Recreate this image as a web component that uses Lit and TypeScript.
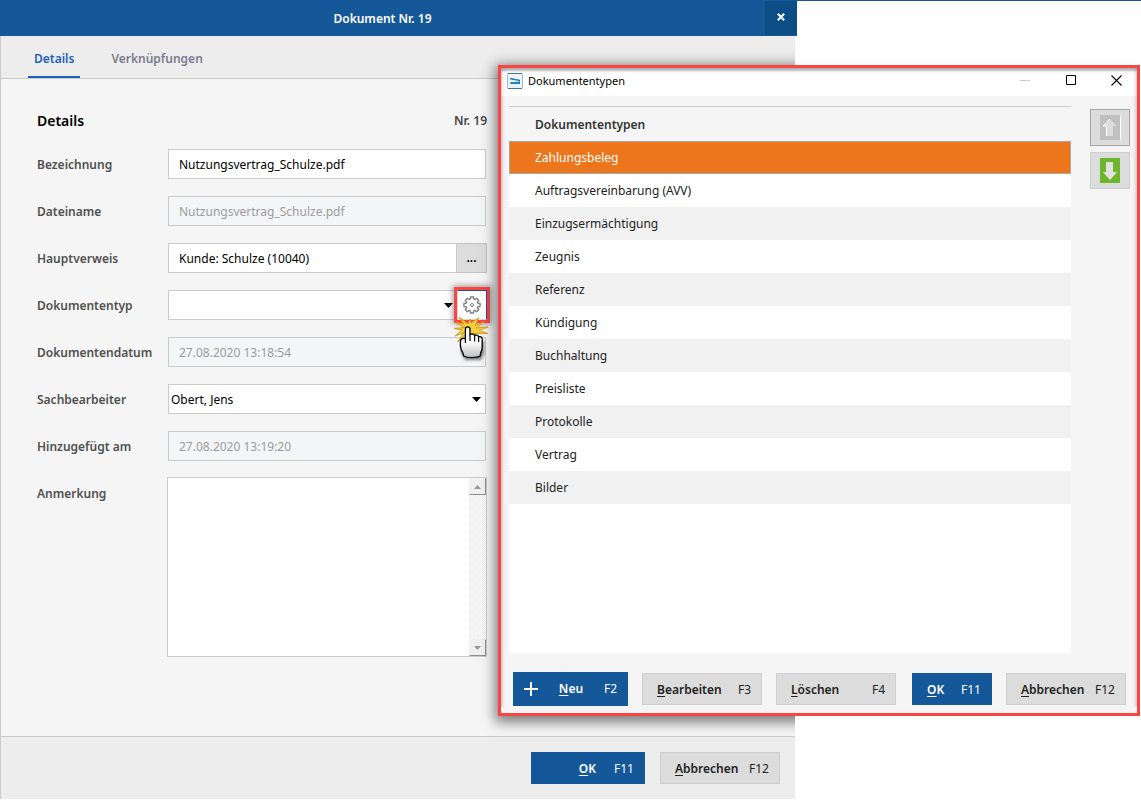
import { LitElement, html, css } from "lit";
import { customElement, property, state } from "lit/decorators.js";
import { classMap } from "lit/directives/class-map.js";

const base = css`
  *,
  *::before,
  *::after {
    box-sizing: border-box;
  }
  button,
  input,
  select,
  textarea {
    font: inherit;
    color: inherit;
    margin: 0;
    border-radius: 0;
  }
  button {
    cursor: pointer;
  }
`;

@customElement("command-button")
export class CommandButton extends LitElement {
  static styles = [
    base,
    css`
      :host {
        display: block;
        width: 120px;
      }
      .button {
        display: flex;
        align-items: center;
        justify-content: space-between;
        width: 100%;
        height: 32px;
        padding: 2px 10px 0 14px;
        border: 1px solid #cfcfcf;
        background: #dcdcdc;
        color: #222;
      }
      .primary {
        border-color: #145899;
        background: #145899;
        color: #fff;
      }
      .tall {
        height: 34px;
        padding: 0 10px;
      }
      .trailing {
        justify-content: flex-end;
        gap: 18px;
      }
      .label {
        font-weight: 600;
      }
      .mnemonic {
        text-decoration: underline;
        text-underline-offset: 2px;
      }
      .icon {
        display: block;
        width: 14px;
        height: 14px;
      }
    `,
  ];

  @property() label = "";
  @property() shortcut = "";
  @property({ type: Boolean }) primary = false;
  @property({ type: Boolean }) plus = false;
  @property({ type: Boolean }) trailing = false;

  render() {
    return html`<button
      type="button"
      class=${classMap({
        button: true,
        primary: this.primary,
        tall: this.plus,
        trailing: this.trailing,
      })}
    >
      ${this.plus
        ? html`<svg class="icon" viewBox="0 0 14 14" aria-hidden="true">
            <path d="M7 0v14M0 7h14" stroke="#fff" stroke-width="2" />
          </svg>`
        : ""}
      <span class="label"
        ><span class="mnemonic">${this.label.slice(0, 1)}</span>${this.label.slice(1)}</span
      >
      <span>${this.shortcut}</span>
    </button>`;
  }
}

@customElement("document-form")
export class DocumentForm extends LitElement {
  static styles = [
    base,
    css`
      :host {
        display: block;
      }
      .form {
        width: 450px;
        max-width: 100%;
        display: grid;
        gap: 17px;
      }
      .heading {
        display: flex;
        align-items: center;
        justify-content: space-between;
        height: 23px;
        color: #444;
        font-weight: 600;
      }
      .title {
        margin: 0;
        font-size: 14px;
        font-weight: 600;
        color: #000;
      }
      .row {
        display: grid;
        grid-template-columns: 131px 1fr;
        align-items: start;
      }
      .label {
        padding-top: 2px;
        line-height: 28px;
        font-weight: 600;
        color: #505050;
        white-space: nowrap;
      }
      .control {
        display: flex;
        min-width: 0;
        position: relative;
        padding-right: 1px;
      }
      .joined {
        padding-right: 0;
      }
      .text,
      .select {
        flex: 1;
        min-width: 0;
        height: 30px;
        border: 1px solid #cbcbcb;
        background: #fff;
        color: #000;
        outline: none;
      }
      .text {
        padding: 0 10px;
      }
      .text:disabled {
        background: #f4f5f7;
        color: #9c9c9c;
      }
      .select {
        appearance: none;
        padding: 2px 24px 0 2px;
      }
      .arrow {
        position: absolute;
        right: 6px;
        top: 13px;
        width: 9px;
        height: 5px;
        pointer-events: none;
      }
      .joined .arrow {
        right: 34px;
      }
      .more {
        width: 30px;
        height: 30px;
        padding: 0;
        border: 1px solid #c4c4c4;
        border-left: 0;
        background: #dcdcdc;
        color: #000;
        font-weight: 600;
      }
      .gear {
        width: 30px;
        height: 30px;
        padding: 0;
        display: grid;
        place-items: center;
        border: 1px solid #d8d8d8;
        border-top-color: #145899;
        border-right: 1px solid #145899;
        background: #fff;
        outline: 3px solid #fb4444;
        box-shadow: 0 0 6px 4px rgba(0, 0, 0, 0.4);
        position: relative;
      }
      .gear-icon {
        display: block;
        width: 18px;
        height: 18px;
      }
      .pointer {
        position: absolute;
        right: -2px;
        top: 27px;
        width: 36px;
        height: 48px;
        overflow: visible;
        pointer-events: none;
        z-index: 1;
      }
      .memo {
        display: flex;
        margin: -1px 0 0 -1px;
        height: 180px;
        border: 1px solid #cbcbcb;
        background: #fff;
      }
      .area {
        flex: 1;
        min-width: 0;
        border: 0;
        padding: 6px 10px;
        resize: none;
        outline: none;
        background: #fff;
        overflow: hidden;
      }
      .scroll {
        display: flex;
        flex-direction: column;
        justify-content: space-between;
        width: 17px;
        background: repeating-conic-gradient(#ececec 0 25%, #fff 0 50%) 0 0 / 2px 2px;
      }
      .step {
        width: 17px;
        height: 17px;
        padding: 0;
        display: grid;
        place-items: center;
        border: 1px solid #f0f0f0;
        border-right-color: #8e8e8e;
        border-bottom-color: #8e8e8e;
        background: #f0f0f0;
      }
      .step-icon {
        display: block;
        width: 7px;
        height: 4px;
      }
    `,
  ];

  private arrow() {
    return html`<svg class="arrow" viewBox="0 0 9 5" aria-hidden="true">
      <path d="M0 0h9L4.500 5z" fill="#000" />
    </svg>`;
  }

  private gearPath() {
    const points: string[] = [];
    const teeth = 8;
    for (let i = 0; i < teeth; i++) {
      const center = (i / teeth) * Math.PI * 2;
      for (const [offset, radius] of [
        [-0.28, 6.2],
        [-0.19, 8.2],
        [0.19, 8.2],
        [0.28, 6.2],
      ]) {
        const x = 9 + radius * Math.sin(center + offset);
        const y = 9 - radius * Math.cos(center + offset);
        points.push(`${x.toFixed(2)} ${y.toFixed(2)}`);
      }
    }
    return `M${points.join("L")}Z`;
  }

  render() {
    return html`<form class="form">
      <div class="heading">
        <h2 class="title">Details</h2>
        <span>Nr. 19</span>
      </div>
      <div class="row">
        <label class="label" for="name">Bezeichnung</label>
        <div class="control">
          <input class="text" id="name" value="Nutzungsvertrag_Schulze.pdf" />
        </div>
      </div>
      <div class="row">
        <label class="label" for="file">Dateiname</label>
        <div class="control">
          <input class="text" id="file" value="Nutzungsvertrag_Schulze.pdf" disabled />
        </div>
      </div>
      <div class="row">
        <label class="label" for="reference">Hauptverweis</label>
        <div class="control joined">
          <input class="text" id="reference" value="Kunde: Schulze (10040)" />
          <button class="more" type="button" aria-label="Hauptverweis wählen">...</button>
        </div>
      </div>
      <div class="row">
        <label class="label" for="type">Dokumententyp</label>
        <div class="control joined">
          <select class="select" id="type">
            <option></option>
          </select>
          ${this.arrow()}
          <button class="gear" type="button" aria-label="Dokumententypen verwalten">
            <svg class="gear-icon" viewBox="0 0 18 18" aria-hidden="true">
              <path
                d=${this.gearPath()}
                fill="none"
                stroke="#808080"
                stroke-width="1.400"
                stroke-linejoin="round"
              />
              <circle cx="9" cy="9" r="1.500" fill="none" stroke="#808080" />
            </svg>
          </button>
          <svg class="pointer" viewBox="0 0 36 48" aria-hidden="true">
            <defs>
              <linearGradient id="skin" x1="0" y1="0" x2="0" y2="1">
                <stop offset="0.500" stop-color="#fff" />
                <stop offset="1" stop-color="#bdbdbd" />
              </linearGradient>
              <filter id="soft" x="-40%" y="-40%" width="180%" height="180%">
                <feGaussianBlur stdDeviation="1.800" />
              </filter>
            </defs>
            <path
              d="M12 10.500 1 11.500l8 1.500-7 6 9-3.500L4.500 25 14 17l10 2-4-2.500 15 0-9-3 9-3.500-12 1 8-6-9 3.500L25.500 1 18 6 17 2l-2 5L6 0l5 7-9-1.500z"
              fill="#f3cf3f"
              stroke="#d6a016"
              stroke-width="1"
            />
            <path
              d="M10 24h21v13l-3 6H12l-4-8z"
              fill="#000"
              opacity="0.500"
              filter="url(#soft)"
            />
            <path
              d="M12.400 12.200c0-3.200 4.600-3.200 4.600 0v5.600c.6-1.200 4-1.200 4.600.8.8-1 3.700-.6 4 1.200 1.200-.7 3.600.2 3.600 2.200v8.500c0 2.500-1.200 4.200-1.700 6l-.3 2.500c-3.500 2.100-12.500 2.100-16.500 0-.3-2.600-1.800-4.600-2.600-6.700-.8-2.300-.9-6-.6-8.500.3-2 2.300-3 4.900-2.100z"
              fill="url(#skin)"
              stroke="#000"
              stroke-width="1.300"
              stroke-linejoin="round"
            />
            <path
              d="M12.400 21v5M17 17.500v6.500M21.600 18.500v6M25.600 20v5"
              stroke="#000"
              stroke-width="1.200"
            />
          </svg>
        </div>
      </div>
      <div class="row">
        <label class="label" for="date">Dokumentendatum</label>
        <div class="control">
          <input class="text" id="date" value="27.08.2020 13:18:54" disabled />
        </div>
      </div>
      <div class="row">
        <label class="label" for="clerk">Sachbearbeiter</label>
        <div class="control">
          <select class="select" id="clerk">
            <option>Obert, Jens</option>
          </select>
          ${this.arrow()}
        </div>
      </div>
      <div class="row">
        <label class="label" for="added">Hinzugefügt am</label>
        <div class="control">
          <input class="text" id="added" value="27.08.2020 13:19:20" disabled />
        </div>
      </div>
      <div class="row">
        <label class="label" for="note">Anmerkung</label>
        <div class="memo">
          <textarea class="area" id="note"></textarea>
          <div class="scroll">
            <button class="step" type="button" aria-label="Nach oben blättern">
              <svg class="step-icon" viewBox="0 0 7 4"><path d="M0 4h7L3.500 0z" fill="#999" /></svg>
            </button>
            <button class="step" type="button" aria-label="Nach unten blättern">
              <svg class="step-icon" viewBox="0 0 7 4"><path d="M0 0h7L3.500 4z" fill="#999" /></svg>
            </button>
          </div>
        </div>
      </div>
    </form>`;
  }
}

@customElement("type-dialog")
export class TypeDialog extends LitElement {
  static styles = [
    base,
    css`
      :host {
        display: block;
      }
      .dialog {
        border: 3px solid #fb4444;
        background: #f5f5f5;
        position: relative;
      }
      .dialog::after {
        content: "";
        position: absolute;
        inset: 0;
        pointer-events: none;
        box-shadow:
          inset 0 3px 2px rgba(0, 0, 0, 0.22),
          inset 0 0 5px rgba(0, 0, 0, 0.28);
        clip-path: inset(0 0 6px 0);
      }
      .bar {
        display: flex;
        align-items: center;
        height: 28px;
        padding: 0 6px 3px 6px;
        background: #fff;
        color: #000;
      }
      .logo {
        display: block;
        width: 16px;
        height: 16px;
        margin-right: 5px;
      }
      .caption {
        flex: 1;
        margin: 0;
        padding-top: 1px;
        font-size: 11px;
        font-weight: 400;
      }
      .window-button {
        display: grid;
        place-items: center;
        width: 30px;
        height: 24px;
        padding: 0;
        border: 0;
        background: none;
      }
      .window-buttons {
        display: flex;
        gap: 16px;
      }
      .glyph {
        display: block;
        width: 11px;
        height: 11px;
      }
      .content {
        display: grid;
        grid-template-columns: 1fr 40px;
        gap: 19px;
        padding: 10px 7px 0 8px;
      }
      .list {
        height: 547px;
        background: #fff;
      }
      .table {
        width: 100%;
        border-collapse: collapse;
      }
      .head {
        height: 34px;
        padding: 2px 26px 0;
        text-align: left;
        font-weight: 600;
        color: #333;
        background: #f5f5f5;
        border-top: 1px solid #cbcbcb;
      }
      .cell {
        height: 33px;
        padding: 2px 26px 0;
        color: #222;
        cursor: default;
      }
      .line:nth-child(odd) .cell {
        background: #f1f1f1;
      }
      .line.selected .cell {
        background: #ed751b;
        color: #fff;
        box-shadow: inset 0 0 0 1px #a9a9a9;
      }
      .order {
        display: flex;
        flex-direction: column;
        gap: 6px;
        padding-top: 3px;
      }
      .move {
        display: grid;
        place-items: center;
        width: 40px;
        height: 37px;
        padding: 0;
        border: 1px solid #cfcfcf;
        background: #dcdcdc;
      }
      .move:disabled {
        border-color: #a6a6a6;
      }
      .move-icon {
        display: block;
        width: 21px;
        height: 25px;
      }
      .actions {
        display: flex;
        align-items: center;
        gap: 14px;
        padding: 19px 11px 7px 12px;
      }
      .new {
        width: 115px;
      }
      .confirm {
        width: 80px;
        margin-left: auto;
      }
    `,
  ];

  @state() private selected = 0;

  private types = [
    "Zahlungsbeleg",
    "Auftragsvereinbarung (AVV)",
    "Einzugsermächtigung",
    "Zeugnis",
    "Referenz",
    "Kündigung",
    "Buchhaltung",
    "Preisliste",
    "Protokolle",
    "Vertrag",
    "Bilder",
  ];

  render() {
    return html`<section class="dialog" role="dialog" aria-labelledby="caption">
      <header class="bar">
        <svg class="logo" viewBox="0 0 16 16" aria-hidden="true">
          <rect x="0.500" y="0.500" width="15" height="15" rx="1" fill="#eef3f7" stroke="#9db9cc" />
          <path d="M1 .5h14M1 15.500h14" stroke="#44748f" />
          <path d="M3 5l10 2v2H4l-1 1.500h10V9" fill="#1c7fc4" />
          <path d="M3 5.500l10 2.200M3.500 10.300H13" stroke="#1c7fc4" stroke-width="1.600" />
          <path d="M4 8.200h7" stroke="#eef3f7" />
        </svg>
        <h2 class="caption" id="caption">Dokumententypen</h2>
        <div class="window-buttons">
          <button class="window-button" type="button" aria-label="Minimieren" disabled>
            <svg class="glyph" viewBox="0 0 11 11"><path d="M1 5.500h10" stroke="#ccc" /></svg>
          </button>
          <button class="window-button" type="button" aria-label="Maximieren">
            <svg class="glyph" viewBox="0 0 11 11">
              <path d="M1.500 .5h9v9h-9z" fill="none" stroke="#000" />
            </svg>
          </button>
          <button class="window-button" type="button" aria-label="Schließen">
            <svg class="glyph" viewBox="0 0 11 11">
              <path d="M.5.5l10 10M10.500.5l-10 10" stroke="#000" stroke-width="1.100" />
            </svg>
          </button>
        </div>
      </header>
      <div class="content">
        <div class="list">
          <table class="table">
            <thead>
              <tr>
                <th class="head" scope="col">Dokumententypen</th>
              </tr>
            </thead>
            <tbody>
              ${this.types.map(
                (type, index) => html`<tr
                  class=${classMap({ line: true, selected: index === this.selected })}
                  @click=${() => (this.selected = index)}
                >
                  <td class="cell">${type}</td>
                </tr>`
              )}
            </tbody>
          </table>
        </div>
        <div class="order">
          <button class="move" type="button" aria-label="Nach oben" disabled>
            <svg class="move-icon" viewBox="0 0 21 25">
              <path d="M0 0h20v25H0z" fill="#c0c0c0" />
              <path d="M20.500 1v24" stroke="#fff" />
              <path d="M10 4l7 7h-4v10H6.500V11H3z" fill="#dcdcdc" />
              <path d="M10 4l-7 7h3.500v10" fill="none" stroke="#fff" />
            </svg>
          </button>
          <button class="move" type="button" aria-label="Nach unten">
            <svg class="move-icon" viewBox="0 0 21 25">
              <path d="M0 0h20v25H0z" fill="#6fb52c" />
              <path d="M6 4h7v10h4l-7 8-7-8h3z" fill="#e2e2e2" />
            </svg>
          </button>
        </div>
      </div>
      <footer class="actions">
        <command-button class="new" label="Neu" shortcut="F2" primary plus></command-button>
        <command-button label="Bearbeiten" shortcut="F3"></command-button>
        <command-button label="Löschen" shortcut="F4"></command-button>
        <command-button class="confirm" label="OK" shortcut="F11" primary></command-button>
        <command-button label="Abbrechen" shortcut="F12"></command-button>
      </footer>
    </section>`;
  }
}

@customElement("app-root")
export class AppRoot extends LitElement {
  static styles = [
    base,
    css`
      :host {
        display: block;
        position: relative;
        min-height: 100vh;
        background: #fff;
        border-top: 1px solid #145899;
        font-family: "Noto Sans", "Open Sans", sans-serif;
        font-size: 12px;
        line-height: 18px;
        color: #222;
        box-sizing: border-box;
      }
      .window {
        display: flex;
        flex-direction: column;
        width: calc(100% - 344px);
        min-height: calc(100vh - 2px);
      }
      .bar {
        display: flex;
        height: 35px;
        background: #145899;
        color: #fff;
      }
      .name {
        flex: 1;
        margin: 0;
        text-align: center;
        font-size: 12px;
        line-height: 35px;
        font-weight: 600;
      }
      .close {
        display: grid;
        place-items: center;
        width: 32px;
        height: 34px;
        padding: 0 0 2px;
        border: 0;
        background: #0d4d86;
      }
      .close-icon {
        display: block;
        width: 8px;
        height: 8px;
      }
      .frame {
        flex: 1;
        display: flex;
        flex-direction: column;
        margin-right: 2px;
        border-left: 1px solid #cbcbcb;
        background: #f5f5f5;
        position: relative;
        overflow: hidden;
      }
      .tabs {
        display: flex;
        gap: 25px;
        height: 43px;
        padding-left: 27px;
        background: #ededed;
        border-bottom: 1px solid #cbcbcb;
      }
      .tab {
        padding: 6px 6px 0;
        border-bottom: 2px solid transparent;
        color: #7c7b8d;
        font-weight: 600;
        line-height: 34px;
        text-decoration: none;
      }
      .current {
        color: #1f5fb9;
        border-color: #1f5fb9;
      }
      .body {
        flex: 1;
        padding: 30px 36px 24px;
      }
      .footer {
        display: flex;
        justify-content: flex-end;
        gap: 15px;
        padding: 15px;
        background: #ededed;
        border-top: 1px solid #cbcbcb;
      }
      .confirm {
        width: 114px;
      }
      .shadow {
        position: absolute;
        left: 497px;
        top: 29px;
        right: -40px;
        height: 651px;
        box-shadow: 0 3px 12px 3px rgba(0, 0, 0, 0.5);
        pointer-events: none;
      }
      .overlay {
        position: absolute;
        left: 498px;
        right: 1px;
        top: 64px;
      }
    `,
  ];

  render() {
    return html`
      <main class="window">
        <header class="bar">
          <h1 class="name">Dokument Nr. 19</h1>
          <button class="close" type="button" aria-label="Schließen">
            <svg class="close-icon" viewBox="0 0 8 8">
              <path d="M.8.8l6.400 6.400M7.200.8L.8 7.200" stroke="#fff" stroke-width="2" />
            </svg>
          </button>
        </header>
        <div class="frame">
          <nav class="tabs">
            <a class="tab current" href="#details">Details</a>
            <a class="tab" href="#links">Verknüpfungen</a>
          </nav>
          <div class="body"><document-form></document-form></div>
          <footer class="footer">
            <command-button
              class="confirm"
              label="OK"
              shortcut="F11"
              primary
              trailing
            ></command-button>
            <command-button label="Abbrechen" shortcut="F12"></command-button>
          </footer>
          <div class="shadow"></div>
        </div>
      </main>
      <type-dialog class="overlay"></type-dialog>
    `;
  }
}
